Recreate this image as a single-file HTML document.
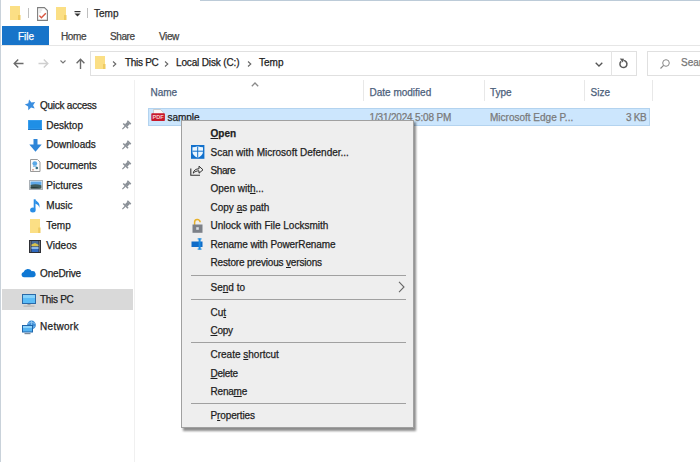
<!DOCTYPE html>
<html><head><meta charset="utf-8">
<style>
*{margin:0;padding:0;box-sizing:border-box}
html,body{width:700px;height:462px;overflow:hidden;background:#fff}
body{position:relative;font-family:"Liberation Sans",sans-serif;font-size:10px;color:#1e1e1e}
.a{position:absolute}
.t{position:absolute;white-space:nowrap;line-height:12px;font-size:10px;-webkit-text-stroke:0.25px currentColor}
svg{position:absolute;overflow:visible}
u{text-decoration:underline;text-underline-offset:1px}
</style></head><body>
<!-- left window border -->
<div class="a" style="left:0;top:0;width:1.2px;height:462px;background:#c9d2da"></div>
<!-- top accent line -->
<div class="a" style="left:200px;top:0;width:500px;height:1px;background:#bccbd8"></div>

<!-- quick access toolbar -->
<svg style="left:10px;top:6px" width="11" height="14" viewBox="0 0 11 14"><rect x="0" y="0" width="10" height="14" fill="#fbdf85"/><rect x="8" y="9" width="2.5" height="5" fill="#efcb62"/></svg>
<div class="a" style="left:28px;top:8px;width:1px;height:10px;background:#bfbfbf"></div>
<svg style="left:37px;top:7px" width="11" height="14" viewBox="0 0 11 14"><path d="M0.6 0.6h6.8l3 3v9.8H0.6z" fill="#fff" stroke="#7e7e7e" stroke-width="1.1"/><path d="M2.2 3h3M2.2 5h2" stroke="#c9c9c9" stroke-width="0.8"/><path d="M2.4 8.6l2 2.2 4.4-4.6" fill="none" stroke="#d8553f" stroke-width="1.4"/></svg>
<svg style="left:56px;top:7px" width="11" height="14" viewBox="0 0 11 14"><rect x="0" y="0" width="10" height="13" fill="#fbdf85"/><rect x="8" y="8" width="2.5" height="5" fill="#efcb62"/></svg>
<svg style="left:74px;top:11px" width="7" height="6" viewBox="0 0 7 6"><rect x="0.5" y="0" width="6" height="1.2" fill="#333"/><path d="M0.5 2.5h6l-3 3z" fill="#333"/></svg>
<div class="a" style="left:87px;top:8px;width:1px;height:10px;background:#bfbfbf"></div>
<div class="t" style="left:94px;top:8.4px;color:#2a2a2a">Temp</div>

<!-- ribbon tabs -->
<div class="a" style="left:2px;top:26px;width:46.5px;height:19.5px;background:#1874c9"></div>
<div class="t" style="left:18px;top:31px;color:#fff">File</div>
<div class="t" style="left:61px;top:30.5px;color:#444;letter-spacing:-0.35px">Home</div>
<div class="t" style="left:110px;top:30.5px;color:#444;letter-spacing:-0.4px">Share</div>
<div class="t" style="left:159px;top:30.5px;color:#444;letter-spacing:-0.4px">View</div>
<div class="a" style="left:1px;top:45px;width:699px;height:1px;background:#e6e6e6"></div>

<!-- nav -->
<svg style="left:12.5px;top:57.5px" width="11" height="11" viewBox="0 0 11 11"><path d="M10.5 5.5H1.2M5.2 1.6L1.2 5.5 5.2 9.4" fill="none" stroke="#6b6b6b" stroke-width="1.4"/></svg>
<svg style="left:37.5px;top:57.5px" width="11" height="11" viewBox="0 0 11 11"><path d="M0.5 5.5h9.3M5.8 1.6L9.8 5.5 5.8 9.4" fill="none" stroke="#cfcfcf" stroke-width="1.4"/></svg>
<svg style="left:60px;top:60px" width="6" height="4" viewBox="0 0 6 4"><path d="M0.5 0.5L3 3 5.5 0.5" fill="none" stroke="#777" stroke-width="1.1"/></svg>
<svg style="left:74.5px;top:57.5px" width="11" height="11" viewBox="0 0 11 11"><path d="M5.5 11V1.2M1.6 5.2L5.5 1.2 9.4 5.2" fill="none" stroke="#6b6b6b" stroke-width="1.4"/></svg>
<div class="a" style="left:90px;top:51px;width:547px;height:25px;border:1px solid #e0e0e0"></div>
<div class="a" style="left:611px;top:51px;width:1px;height:25px;background:#e4e4e4"></div>
<svg style="left:95px;top:56px" width="11" height="13" viewBox="0 0 11 13"><rect x="0" y="0" width="10" height="13" fill="#fbdf85"/><rect x="8" y="8" width="2.5" height="5" fill="#efcb62"/></svg>
<svg style="left:112px;top:61px" width="5" height="6" viewBox="0 0 5 6"><path d="M1 0.5L3.8 3 1 5.5" fill="none" stroke="#666" stroke-width="1.1"/></svg>
<div class="t" style="left:125px;top:57px;color:#222;letter-spacing:-0.3px">This PC</div>
<svg style="left:164px;top:61px" width="5" height="6" viewBox="0 0 5 6"><path d="M1 0.5L3.8 3 1 5.5" fill="none" stroke="#666" stroke-width="1.1"/></svg>
<div class="t" style="left:176px;top:57px;color:#222;letter-spacing:-0.15px">Local Disk (C:)</div>
<svg style="left:247px;top:61px" width="5" height="6" viewBox="0 0 5 6"><path d="M1 0.5L3.8 3 1 5.5" fill="none" stroke="#666" stroke-width="1.1"/></svg>
<div class="t" style="left:259px;top:57px;color:#222">Temp</div>
<svg style="left:595px;top:62px" width="8" height="5" viewBox="0 0 8 5"><path d="M0.7 0.7L4 4 7.3 0.7" fill="none" stroke="#555" stroke-width="1.3"/></svg>
<svg style="left:618.3px;top:57.6px" width="10" height="10" viewBox="0 0 10 10"><path d="M3.2 3.4A3.5 3.5 0 1 0 5.5 2.6" fill="none" stroke="#5a5a5a" stroke-width="1.5"/><path d="M1.8 0.6L6 0.8 4.6 4.6z" fill="#5a5a5a"/></svg>
<div class="a" style="left:647px;top:51px;width:60px;height:25px;border:1px solid #e0e0e0"></div>
<svg style="left:660px;top:59px" width="10" height="10" viewBox="0 0 10 10"><circle cx="6" cy="4" r="3.3" fill="none" stroke="#888" stroke-width="1"/><path d="M3.6 6.4L0.5 9.5" stroke="#888" stroke-width="1.2"/></svg>
<div class="t" style="left:681px;top:57px;color:#777">Search</div>

<!-- sidebar -->
<div class="a" style="left:134px;top:80px;width:1px;height:382px;background:#f0f0f0"></div>
<div class="a" style="left:2px;top:289.3px;width:130.5px;height:20.4px;background:#d9d9d9"></div>


<!-- sidebar icons -->
<svg style="left:24.5px;top:99.8px" width="11" height="10" viewBox="0 0 11 10"><polygon points="4.05,-0.43 6.41,2.50 10.15,2.03 8.09,5.19 9.69,8.60 6.05,7.62 3.30,10.19 3.11,6.43 -0.19,4.61 3.33,3.26" fill="#3a8ee0"/></svg>
<svg style="left:28px;top:120px" width="14" height="10" viewBox="0 0 14 10"><rect x="0" y="0" width="14" height="10" fill="#1f8fe6"/><rect x="0" y="9" width="14" height="1" fill="#1068b8"/><rect x="0.5" y="0.5" width="13" height="8.5" fill="none" stroke="#46a6f0" stroke-width="0.6"/></svg>
<svg style="left:28.5px;top:138.5px" width="13" height="13" viewBox="0 0 13 13"><rect x="4.5" y="0" width="4" height="6" fill="#2f86d8"/><path d="M0.3 5.5h12.4L6.5 12.8z" fill="#2f86d8"/></svg>
<svg style="left:30px;top:158.8px" width="11" height="13" viewBox="0 0 11 13"><path d="M0.5 0.5h7l2.5 2.5v9.5h-9.5z" fill="#fafafa" stroke="#9a9a9a"/><circle cx="4.8" cy="4.6" r="2.4" fill="#5aa8e6"/><path d="M3 6.5h3.5v1.5H3z" fill="#8fc4ee"/><circle cx="6.8" cy="9" r="1.3" fill="#3b6f80"/><path d="M2 10h2v1.5H2z" fill="#d9b0a0"/></svg>
<svg style="left:28.5px;top:180px" width="14" height="10" viewBox="0 0 14 10"><rect x="0.5" y="0.5" width="13" height="9" fill="#f2f4f6" stroke="#a9b0b6"/><rect x="1.5" y="1.5" width="11" height="3.5" fill="#5ea7e6"/><path d="M1.5 5Q6 3.5 12.5 5.2V8.5h-11z" fill="#3e5a5a"/><path d="M1.5 7.5Q6 6.5 12.5 8.5H1.5z" fill="#20302e"/></svg>
<svg style="left:30px;top:199px" width="11" height="14" viewBox="0 0 11 14"><path d="M4.6 0.3v10" stroke="#2a8ee6" stroke-width="1.8"/><ellipse cx="2.9" cy="11" rx="2.8" ry="2.5" fill="#2a8ee6"/><path d="M5.2 0.3C6.5 2.8 10.8 3.8 9.2 9C9.2 6.2 7.2 5.2 5.2 4.8z" fill="#2a8ee6"/></svg>
<svg style="left:30px;top:218.5px" width="11" height="14" viewBox="0 0 11 14"><rect x="0" y="0" width="10" height="14" fill="#fbdf85"/><rect x="8.2" y="8.5" width="2.3" height="5.5" fill="#efcb62"/></svg>
<svg style="left:29px;top:240px" width="12" height="13" viewBox="0 0 12 13"><rect x="0" y="0" width="12" height="13" fill="#2e3036"/><rect x="1" y="1" width="1" height="11" fill="#6a6c72"/><rect x="10" y="1" width="1" height="11" fill="#6a6c72"/><rect x="2.5" y="1" width="7" height="5.2" fill="#4a6d9a"/><path d="M2.5 4.5L6 3 9.5 4.8V6.2h-7z" fill="#d9c24a"/><rect x="2.5" y="6.8" width="7" height="5.2" fill="#2f6ac0"/><rect x="2.5" y="6.8" width="7" height="2.2" fill="#8fb8e6"/></svg>
<svg style="left:21px;top:268px" width="15" height="10" viewBox="0 0 15 10"><path d="M2.8 9.3A2.7 2.7 0 0 1 2.6 4 4.5 4.5 0 0 1 10.8 3.2 3.1 3.1 0 0 1 12.2 9.3z" fill="#0f78d4"/></svg>
<svg style="left:21.5px;top:293.5px" width="14" height="14" viewBox="0 0 14 14"><rect x="0.5" y="0.5" width="13" height="9" fill="#5bbcf6" stroke="#2a6aa8"/><rect x="1" y="1" width="12" height="3" fill="#86d2fb"/><rect x="5.5" y="10" width="3" height="1.2" fill="#a0a0a0"/><rect x="1.5" y="11.5" width="11" height="1.3" fill="#b8b8b8"/></svg>
<svg style="left:21.5px;top:319.5px" width="15" height="15" viewBox="0 0 15 15"><circle cx="9.5" cy="5" r="4.4" fill="#3f8fd6"/><path d="M6 3.5Q9.5 1 13 3.5M6.5 7Q9.5 9 12.5 6.5M9.5 0.6v8.8" stroke="#9fd0f5" stroke-width="0.7" fill="none"/><rect x="0.5" y="5.5" width="10" height="6.5" fill="#56b4f2" stroke="#1f65aa"/><rect x="1" y="6" width="9" height="2" fill="#8fd4fb"/><rect x="2.5" y="13" width="6" height="1.2" fill="#7a8a9a"/></svg>
<svg style="left:121px;top:120.5px" width="9" height="9" viewBox="0 0 9 9"><g transform="rotate(45 5 4.5)" fill="#8a9097"><rect x="2.6" y="-0.6" width="4.8" height="1.6"/><rect x="3.3" y="0.8" width="3.4" height="3.6"/><rect x="1.6" y="4.2" width="6.8" height="1.6"/><rect x="4.4" y="5.6" width="1.2" height="4"/></g></svg>
<svg style="left:121px;top:141px" width="9" height="9" viewBox="0 0 9 9"><g transform="rotate(45 5 4.5)" fill="#8a9097"><rect x="2.6" y="-0.6" width="4.8" height="1.6"/><rect x="3.3" y="0.8" width="3.4" height="3.6"/><rect x="1.6" y="4.2" width="6.8" height="1.6"/><rect x="4.4" y="5.6" width="1.2" height="4"/></g></svg>
<svg style="left:121px;top:161px" width="9" height="9" viewBox="0 0 9 9"><g transform="rotate(45 5 4.5)" fill="#8a9097"><rect x="2.6" y="-0.6" width="4.8" height="1.6"/><rect x="3.3" y="0.8" width="3.4" height="3.6"/><rect x="1.6" y="4.2" width="6.8" height="1.6"/><rect x="4.4" y="5.6" width="1.2" height="4"/></g></svg>
<svg style="left:121px;top:181px" width="9" height="9" viewBox="0 0 9 9"><g transform="rotate(45 5 4.5)" fill="#8a9097"><rect x="2.6" y="-0.6" width="4.8" height="1.6"/><rect x="3.3" y="0.8" width="3.4" height="3.6"/><rect x="1.6" y="4.2" width="6.8" height="1.6"/><rect x="4.4" y="5.6" width="1.2" height="4"/></g></svg>
<svg style="left:121px;top:201px" width="9" height="9" viewBox="0 0 9 9"><g transform="rotate(45 5 4.5)" fill="#8a9097"><rect x="2.6" y="-0.6" width="4.8" height="1.6"/><rect x="3.3" y="0.8" width="3.4" height="3.6"/><rect x="1.6" y="4.2" width="6.8" height="1.6"/><rect x="4.4" y="5.6" width="1.2" height="4"/></g></svg>
<div class="t" style="left:40px;top:100px;letter-spacing:-0.25px">Quick access</div>
<div class="t" style="left:46.3px;top:119.5px">Desktop</div>
<div class="t" style="left:46.3px;top:139px">Downloads</div>
<div class="t" style="left:46.3px;top:159.5px">Documents</div>
<div class="t" style="left:46.3px;top:179.5px">Pictures</div>
<div class="t" style="left:46.3px;top:199.5px">Music</div>
<div class="t" style="left:46.3px;top:219.5px">Temp</div>
<div class="t" style="left:46.3px;top:239.5px">Videos</div>
<div class="t" style="left:40px;top:267.6px;letter-spacing:-0.15px">OneDrive</div>
<div class="t" style="left:40px;top:294.4px;letter-spacing:-0.3px">This PC</div>
<div class="t" style="left:40px;top:320.5px;letter-spacing:0.3px">Network</div>

<!-- headers -->
<div class="a" style="left:363px;top:80px;width:1px;height:21px;background:#e8e8e8"></div>
<div class="a" style="left:484px;top:80px;width:1px;height:21px;background:#e8e8e8"></div>
<div class="a" style="left:584px;top:80px;width:1px;height:21px;background:#e8e8e8"></div>
<div class="a" style="left:652px;top:80px;width:1px;height:21px;background:#e8e8e8"></div>
<svg style="left:251px;top:81.5px" width="8" height="5" viewBox="0 0 8 5"><path d="M0.8 4.2L4 1 7.2 4.2" fill="none" stroke="#8a8a8a" stroke-width="1.3"/></svg>
<div class="t" style="left:150.5px;top:87px;color:#4c607a">Name</div>
<div class="t" style="left:369.5px;top:87px;color:#4c607a">Date modified</div>
<div class="t" style="left:490px;top:87px;color:#4c607a">Type</div>
<div class="t" style="left:590.5px;top:87px;color:#4c607a">Size</div>

<!-- selected row -->
<div class="a" style="left:147.5px;top:107.5px;width:502px;height:18px;background:#cce6fd;border:1px solid #b3d3ef"></div>
<svg style="left:150.5px;top:108px" width="15" height="15" viewBox="0 0 15 15"><path d="M2.5 1.5h7l2.8 2.8v4h-9.8z" fill="#f7f7f7" stroke="#c4c4c4" stroke-width="0.8"/><rect x="0.3" y="5.2" width="13.6" height="7.8" rx="0.8" fill="#c8192b"/><text x="7.1" y="11.3" font-size="5.6" font-family="Liberation Sans" font-weight="bold" fill="#f5d0d0" text-anchor="middle">PDF</text></svg>
<div class="t" style="left:167.4px;top:111.5px;color:#1e1e1e">sample</div>
<div class="t" style="left:369.5px;top:111.5px;color:#7a7a7a;letter-spacing:-0.17px">1/31/2024 5:08 PM</div>
<div class="t" style="left:490px;top:111.5px;color:#7a7a7a">Microsoft Edge P...</div>
<div class="t" style="left:626px;top:111.5px;color:#7a7a7a;letter-spacing:-0.4px;word-spacing:0.3px">3 KB</div>

<!-- context menu -->
<div class="a" style="left:183px;top:122px;width:233px;height:308.5px;background:rgba(0,0,0,0.45);filter:blur(0.8px)"></div>
<div class="a" style="left:181px;top:120px;width:233px;height:308px;background:#eeeeee;border:1px solid #a0a0a0"></div>


<!-- menu icons -->
<svg style="left:190.7px;top:144.8px" width="14" height="14" viewBox="0 0 14 14"><rect x="0" y="0" width="13.4" height="13.8" fill="#1170cc"/><path d="M6.7 1.3C5 2 3.3 2.3 1.4 2.3V6.8C1.4 9.6 3.6 11.6 6.7 12.8 9.8 11.6 12 9.6 12 6.8V2.3C10.1 2.3 8.4 2 6.7 1.3z" fill="#eaf6ff"/><path d="M6.7 1.5v11.2M1.4 6.2h10.6" stroke="#1170cc" stroke-width="1"/></svg>
<svg style="left:190px;top:164.5px" width="14" height="11" viewBox="0 0 14 11"><path d="M0.8 3.5v6.7h9.2" fill="none" stroke="#333" stroke-width="1.1"/><path d="M3.2 8.2C3.6 5.2 6 3.8 9 3.8V1.2L13 4.8 9 8.2V5.8C6.8 5.8 4.8 6.6 3.2 8.2z" fill="none" stroke="#333" stroke-width="1"/></svg>
<svg style="left:191.5px;top:218.5px" width="11" height="14" viewBox="0 0 11 14"><path d="M2.6 6V3.6A2.8 2.8 0 0 1 8.2 3.2" fill="none" stroke="#e8b12a" stroke-width="1.5"/><rect x="0.5" y="5.5" width="10" height="8.3" fill="#7d8188"/><rect x="4.2" y="8.2" width="2.6" height="2.6" fill="#d9dde2"/></svg>
<svg style="left:190.5px;top:238px" width="12" height="12" viewBox="0 0 12 12"><rect x="0.5" y="3.5" width="11" height="5.5" fill="#0f6cc8"/><rect x="7.6" y="0.5" width="2" height="11" fill="#1a8ae0"/><rect x="6.6" y="0.4" width="4" height="1" fill="#1a8ae0"/><rect x="6.6" y="10.6" width="4" height="1" fill="#1a8ae0"/></svg>
<div class="t" style="left:210.5px;top:127.5px;font-weight:bold"><u>O</u>pen</div>
<div class="t" style="left:210.5px;top:146.6px">Scan with Microsoft Defender...</div>
<div class="t" style="left:210.5px;top:165px;letter-spacing:-0.4px">Share</div>
<div class="t" style="left:210.5px;top:183px">Open wit<u>h</u>...</div>
<div class="t" style="left:210.5px;top:201.5px">Copy <u>a</u>s path</div>
<div class="t" style="left:210.5px;top:220px">Unlock with File Locksmith</div>
<div class="t" style="left:210.5px;top:238.5px;letter-spacing:-0.1px">Rename with PowerRename</div>
<div class="t" style="left:210.5px;top:257px;letter-spacing:-0.17px">Restore previous <u>v</u>ersions</div>
<div class="a" style="left:190.5px;top:274.6px;width:215px;height:1px;background:#a0a0a0"></div>
<div class="t" style="left:210.5px;top:281.5px">Se<u>n</u>d to</div>
<svg style="left:398px;top:281px" width="7" height="12" viewBox="0 0 7 12"><path d="M1 0.8L6 6 1 11.2" fill="none" stroke="#666" stroke-width="1.1"/></svg>
<div class="a" style="left:190.5px;top:299px;width:215px;height:1px;background:#a0a0a0"></div>
<div class="t" style="left:210.5px;top:306.5px">Cu<u>t</u></div>
<div class="t" style="left:210.5px;top:325px;letter-spacing:-0.3px"><u>C</u>opy</div>
<div class="a" style="left:190.5px;top:341.6px;width:215px;height:1px;background:#a0a0a0"></div>
<div class="t" style="left:210.5px;top:349px">Create <u>s</u>hortcut</div>
<div class="t" style="left:210.5px;top:367.5px;letter-spacing:-0.25px"><u>D</u>elete</div>
<div class="t" style="left:210.5px;top:386px;letter-spacing:-0.2px">Rena<u>m</u>e</div>
<div class="a" style="left:190.5px;top:403px;width:215px;height:1px;background:#a0a0a0"></div>
<div class="t" style="left:210.5px;top:410px;letter-spacing:-0.12px">P<u>r</u>operties</div>

</body></html>
